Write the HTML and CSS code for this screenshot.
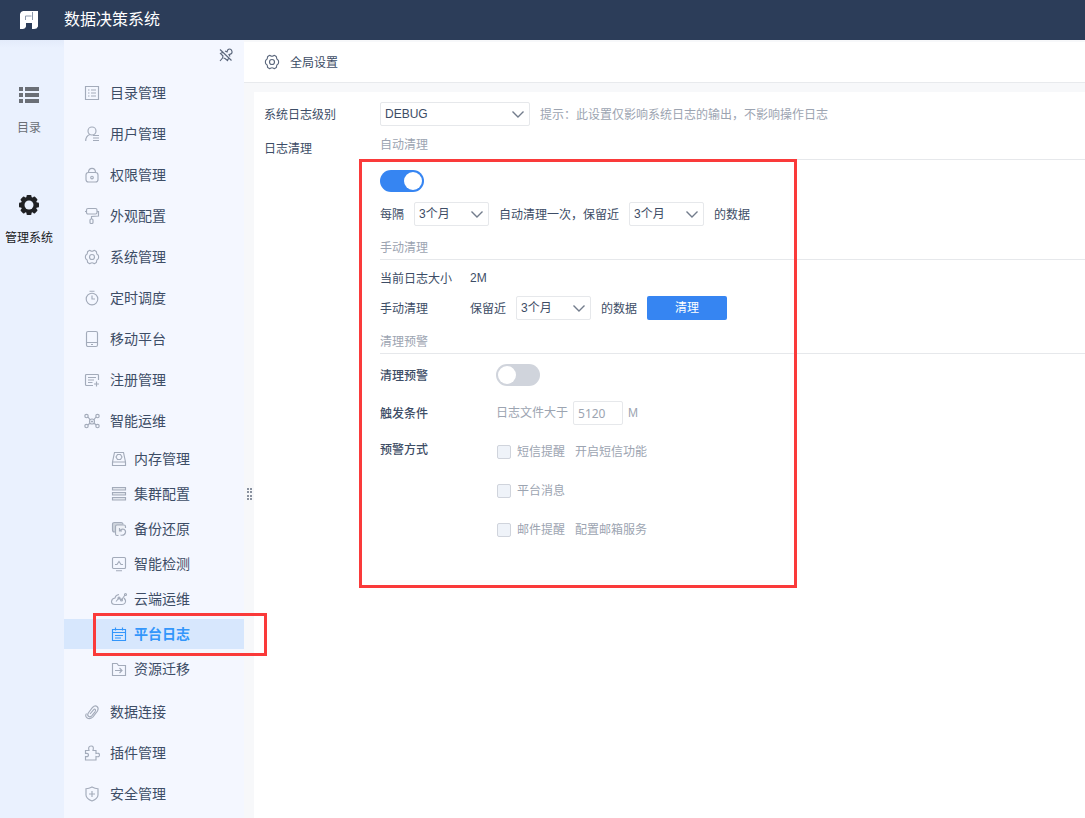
FILE: index.html
```html
<!DOCTYPE html>
<html lang="zh-CN">
<head>
<meta charset="utf-8">
<meta name="viewport" content="width=device-width, initial-scale=1">
<title>数据决策系统</title>
<link rel="stylesheet" href="styles.css">
</head>
<body>
<header class="header">
  <svg class="logo" viewBox="0 0 20 20" aria-hidden="true"><path d="M4 1H19v15.500Q18 19 15 19h-2v-6H7v3.500Q6.500 18.500 4 19H1V4Q1.500 1.500 4 1z" fill="#fff"/><path d="M6.500 10V6H12.500M13.500 2v8" fill="none" stroke="#8c98ab"/></svg>
  <h1 class="title">数据决策系统</h1>
</header>
<div class="layout">
  <nav class="rail" aria-label="主导航">
    <a class="rail-item" href="#"><svg class="rail-icon" viewBox="0 0 20 20"><path d="M0 2h4v4H0zM6 2h14v4H6zM0 8h4v4H0zM6 8h14v4H6zM0 14h4v4H0zM6 14h14v4H6z" fill="#6b6f76"/></svg><span>目录</span></a>
    <a class="rail-item current" href="#"><svg class="rail-icon" viewBox="0 0 20 20"><g fill="#202124"><g id="teeth"><rect x="7.500" y="0" width="5" height="20" rx="1"/><rect x="0" y="7.500" width="20" height="5" rx="1"/></g><use href="#teeth" transform="rotate(45 10 10)"/><circle cx="10" cy="10" r="8.200"/></g><circle cx="10" cy="10" r="4.500" fill="#eaf1fe"/></svg><span>管理系统</span></a>
  </nav>
  <aside class="sidebar">
    <div class="pin-row"><button class="pin" type="button" aria-label="取消固定"><svg viewBox="0 0 14 14" class="icon"><path d="M6 3L8 4Q8.500 1 10.500 1T13 3.500 10 6.500L11 8.500M3.500 4.500L1.500 5.500 4 8 3.500 10 1 13M4.500 10L6 10.500 8.500 12.500 9.500 10.500M1 1.500l11.500 11"/></svg></button></div>
    <ul class="menu">
      <li><a class="item" href="#"><svg class="icon" viewBox="0 0 14 14"><path d="M.5.500h13v13H.500zM3 4h1.500M3 7h1.500M3 10h1.500M6 4h5M6 7h5M6 10h5"/></svg>目录管理</a></li>
      <li><a class="item" href="#"><svg class="icon" viewBox="0 0 14 14"><circle cx="7" cy="4" r="4"/><path d="M5 7.500C2 8.500.700 10.500.700 14M8 8.500h6M8 11h6M8 13.500h6"/></svg>用户管理</a></li>
      <li><a class="item" href="#"><svg class="icon" viewBox="0 0 14 14"><rect x="1" y="4.500" width="12" height="9.500" rx="2.500"/><path d="M3.500 4.500C3.500-1 10.500-1 10.500 4.500"/><circle cx="7" cy="9.500" r="1.300"/></svg>权限管理</a></li>
      <li><a class="item" href="#"><svg class="icon" viewBox="0 0 14 14"><rect x="1.500" y="-.5" width="10.500" height="5.500" rx="1.500"/><path d="M0 2.500h1.500M12 2.500h1.500V7L6.500 7.500V10"/><rect x="5" y="10" width="3" height="4.500" rx="1"/></svg>外观配置</a></li>
      <li><a class="item" href="#"><svg class="icon" viewBox="0 0 14 14"><path id="cog" d="M4.300.6Q5 .2 5.500.8Q7 1.700 8.500.8Q9 .2 9.700.6L11.200 1.500Q11.600 1.800 11.500 2.500Q11.500 4.200 13 5Q13.600 5.400 13.600 7Q13.600 8.600 13 9Q11.500 9.800 11.500 11.500Q11.600 12.200 11.200 12.500L9.700 13.400Q9 13.800 8.500 13.200Q7 12.300 5.500 13.200Q5 13.800 4.300 13.400L2.800 12.500Q2.400 12.200 2.500 11.500Q2.500 9.800 1 9Q.4 8.600.4 7Q.4 5.400 1 5Q2.500 4.200 2.500 2.500Q2.400 1.800 2.800 1.500z"/><circle cx="7" cy="7" r="2.500"/></svg>系统管理</a></li>
      <li><a class="item" href="#"><svg class="icon" viewBox="0 0 14 14"><circle cx="7" cy="8" r="5.800"/><path d="M4.500.200h5M7 4.500V8h3"/></svg>定时调度</a></li>
      <li><a class="item" href="#"><svg class="icon" viewBox="0 0 14 14"><rect x="1.500" y="-.5" width="11" height="15" rx="1.500"/><path d="M1.500 10.500h11M6 12.500h2"/></svg>移动平台</a></li>
      <li><a class="item" href="#"><svg class="icon" viewBox="0 0 14 14"><path d="M13.500 7V2.500q0-1-1-1h-11q-1 0-1 1v9q0 1 1 1H8M3 4.500h8M3 7h6M3 9.500h4.500M11.500 8.500v5M9 11h5"/></svg>注册管理</a></li>
      <li><a class="item" href="#"><svg class="icon" viewBox="0 0 14 14"><circle cx="1.500" cy="2" r="1.700"/><circle cx="12.500" cy="2" r="1.700"/><circle cx="1.500" cy="12" r="1.700"/><circle cx="12.500" cy="12" r="1.700"/><circle cx="7" cy="7.500" r="2.500"/><path d="M3 3l2.200 2.800M11 3L8.800 5.800M3 11l2-2M11 11L9 9M6 7l1 1 1-1"/></svg>智能运维</a>
        <ul class="submenu">
          <li><a class="subitem" href="#"><svg class="icon" viewBox="0 0 14 14"><path d="M2.500.500h9l2 9.500v3.500H.500V10zM.500 10h13"/><path d="M5.500 2.500h3L10 5 8.500 7.500h-3L4 5z"/></svg>内存管理</a></li>
          <li><a class="subitem" href="#"><svg class="icon" viewBox="0 0 14 14"><path d="M.5.500h13v2.500H.500zM.500 5.500h13V8H.500zM.500 10.500h13V13H.500z" fill="#e0e4ec"/></svg>集群配置</a></li>
          <li><a class="subitem" href="#"><svg class="icon" viewBox="0 0 14 14"><path d="M3 10H2.500Q.500 10 .5 8V2.500q0-2 2-2H9q2 0 2 2" fill="#cdd3dc"/><path d="M13.500 6V4.500q0-1.500-1.500-1.500H5Q3.500 3 3.500 4.500V12q0 1.500 1.500 1.500h1.500" fill="#eef1f7"/><path d="M7.500 6v3H10M7.800 9C10 5.500 14 7.500 13.500 10.500Q12.500 14 8.500 13"/></svg>备份还原</a></li>
          <li><a class="subitem" href="#"><svg class="icon" viewBox="0 0 14 14"><rect x=".5" y=".5" width="13" height="11" rx="1"/><path d="M3 7.500h2L7 4.500l2 3h2M4 13.700h6"/></svg>智能检测</a></li>
          <li><a class="subitem" href="#"><svg class="icon" viewBox="0 0 14 14"><path d="M12 6q2.500 2.500 1 5-1 1.500-3 1.500H3Q-.5 12.500-.5 9.500-.300 6.500 3 6q.5-3 4-3.500M4 9.500L7 6l2.500 2L13 3"/><circle cx="7" cy="6" r="1"/><circle cx="9.500" cy="8" r="1"/><circle cx="13.500" cy="2.500" r="1"/></svg>云端运维</a></li>
          <li><a class="subitem active" href="#" aria-current="page"><svg class="icon" viewBox="0 0 14 14"><path d="M.5 2.500h13v11H.500zM.500 5.500h13M3.500.500v3M10.500.500v3M3 8.500h8M3 11h6"/></svg>平台日志</a></li>
          <li><a class="subitem" href="#"><svg class="icon" viewBox="0 0 14 14"><path d="M.5 1.500H5l1.500 2h7v10H.500zM3 8.500h7M7.500 6l2.500 2.500L7.500 11"/></svg>资源迁移</a></li>
        </ul>
      </li>
      <li><a class="item" href="#"><svg class="icon" viewBox="0 0 14 14"><path d="M5 9L8.500 4.800Q9.500 3.700 10.300 4.400T10 6.800L6.700 10.800Q5 12.500 3.500 11.300T3.300 8L7.500 2.500Q10 0 12 1.500T12.500 6L8 11.800Q4.800 14.800 2.200 13T1.500 8.500"/></svg>数据连接</a></li>
      <li><a class="item" href="#"><svg class="icon" viewBox="0 0 14 14"><path d="M.5 4.500H4Q2.700.200 6 0T8 4.500h3V7.500q3.500-1 3.500 1.500T11 10.500V14H.500V10.500Q3.500 11 3.500 9T.5 7.500z"/></svg>插件管理</a></li>
      <li><a class="item" href="#"><svg class="icon" viewBox="0 0 14 14"><path d="M7 0q3 1.700 6 1.700V8q0 3.500-6 6-6-2.500-6-6V1.700Q4 1.700 7 0zM7 4v6M4 7h6"/></svg>安全管理</a></li>
    </ul>
  </aside>
  <main class="main">
    <div class="topbar"><svg class="icon topbar-icon" viewBox="0 0 14 14"><use href="#cog"/><circle cx="7" cy="7" r="2.500"/></svg><h2 class="topbar-title">全局设置</h2></div>
    <form class="panel">
      <label class="label" for="level">系统日志级别</label>
      <div class="row">
        <span class="picker wide"><select id="level"><option>DEBUG</option></select><svg class="chevron" viewBox="0 0 12 7"><path d="M.5.500L6 6l5.500-5.500"/></svg></span>
        <span class="hint">提示：此设置仅影响系统日志的输出，不影响操作日志</span>
      </div>
      <div class="label clean-label">日志清理</div>
      <div class="sections">
        <h3 class="section-title first">自动清理</h3>
        <input class="switch" type="checkbox" role="switch" aria-label="自动清理" checked>
        <div class="row">
          <label for="every">每隔</label>
          <span class="picker"><select id="every"><option>3个月</option></select><svg class="chevron" viewBox="0 0 12 7"><path d="M.5.500L6 6l5.500-5.500"/></svg></span>
          <label for="keep">自动清理一次，保留近</label>
          <span class="picker"><select id="keep"><option>3个月</option></select><svg class="chevron" viewBox="0 0 12 7"><path d="M.5.500L6 6l5.500-5.500"/></svg></span>
          <span>的数据</span>
        </div>
        <h3 class="section-title">手动清理</h3>
        <div class="pair"><span>当前日志大小</span><span>2M</span></div>
        <div class="pair"><span>手动清理</span>
          <div class="row">
            <label for="manual">保留近</label>
            <span class="picker"><select id="manual"><option>3个月</option></select><svg class="chevron" viewBox="0 0 12 7"><path d="M.5.500L6 6l5.500-5.500"/></svg></span>
            <span>的数据</span>
            <button class="primary" type="button">清理</button>
          </div>
        </div>
        <h3 class="section-title">清理预警</h3>
        <div class="warning">
          <label class="strong" for="warn">清理预警</label>
          <input class="switch" id="warn" type="checkbox" role="switch">
          <span class="strong">触发条件</span>
          <div class="threshold"><label for="size">日志文件大于</label><input class="number" id="size" type="text" value="5120" disabled><span>M</span></div>
          <span class="strong methods-label">预警方式</span>
          <div class="methods">
            <div class="method"><input class="check" id="sms" type="checkbox" disabled><label for="sms">短信提醒</label><a href="#">开启短信功能</a></div>
            <div class="method"><input class="check" id="msg" type="checkbox" disabled><label for="msg">平台消息</label></div>
            <div class="method"><input class="check" id="mail" type="checkbox" disabled><label for="mail">邮件提醒</label><a href="#">配置邮箱服务</a></div>
          </div>
        </div>
      </div>
    </form>
    <svg class="grip" viewBox="0 0 5 12" aria-hidden="true"><path d="M0 0h2v2H0zM3 0h2v2H3zM0 3h2v2H0zM3 3h2v2H3zM0 7h2v2H0zM3 7h2v2H3zM0 10h2v2H0zM3 10h2v2H3z" fill="#8a92a0"/></svg>
  </main>
</div>
<div class="mark mark-settings"></div>
<div class="mark mark-menu"></div>
</body>
</html>
```
FILE: styles.css
```css
* { box-sizing: border-box; }
body {
  margin: 0;
  min-height: 100vh;
  display: flex;
  flex-direction: column;
  position: relative;
  background: #fff;
  color: #3d4d66;
  font: 12px/16px "Liberation Sans", "Noto Sans CJK SC", sans-serif;
}
h1, h2, h3, ul { margin: 0; padding: 0; font-weight: 400; }
ul { list-style: none; }
a { color: inherit; text-decoration: none; }
button, input, select { font: inherit; color: inherit; margin: 0; }
.header {
  display: flex;
  align-items: center;
  gap: 25px;
  height: 40px;
  padding-left: 19px;
  background: #2c3d59;
  color: #fff;
}
.logo { width: 20px; height: 20px; }
.title { font-size: 16px; line-height: 24px; }
.layout { flex: 1; display: flex; }

.rail {
  width: 64px;
  display: flex;
  flex-direction: column;
  gap: 59px;
  padding-top: 45px;
  background: linear-gradient(#e3ebfa, #eaf1fe 8px);
}
.rail-item {
  display: flex;
  flex-direction: column;
  align-items: center;
  gap: 15px;
  padding-right: 6px;
  color: #6b6f76;
}
.rail-item.current { color: #1a1b1d; }
.rail-icon { width: 20px; height: 20px; }

.sidebar { width: 180px; background: #f4f7ff; }
.pin-row { display: flex; justify-content: flex-end; height: 32px; padding: 8px 11px 0 0; }
.pin { width: 14px; height: 14px; padding: 0; border: 0; background: none; }
.icon {
  display: block;
  flex: none;
  width: 14px;
  height: 14px;
  overflow: visible;
  fill: none;
  stroke: #a3abba;
  stroke-width: 1.15;
}
.pin .icon, .topbar-icon { stroke: #5c687d; }
.item, .subitem { display: flex; align-items: center; font-size: 14px; line-height: 20px; }
.item { height: 41px; gap: 11px; padding-left: 21px; }
.submenu { display: grid; gap: 5px; padding: 3px 0 7px; }
.subitem { height: 30px; gap: 8px; padding-left: 48px; }
.subitem.active { background: #d7e7fd; color: #3396fb; font-weight: 700; }
.active .icon { stroke: #3396fb; }

.main {
  flex: 1;
  min-width: 0;
  position: relative;
  display: flex;
  flex-direction: column;
  padding-top: 2px;
  background: #f7f8fa;
}
.topbar {
  display: flex;
  align-items: center;
  gap: 11px;
  height: 41px;
  padding-left: 21px;
  background: #fff;
  border-bottom: 1px solid #e8eaed;
}
.topbar-title { padding-top: 2px; font-size: 12px; }
.grip { position: absolute; left: 3px; top: 448px; width: 5px; height: 12px; }

.panel {
  flex: 1;
  display: grid;
  grid-template-columns: 116px 1fr;
  grid-template-rows: auto 1fr;
  row-gap: 4px;
  margin: 9px 0 0 10px;
  padding: 10px 0 0 10px;
  background: #fff;
}
.label { padding-top: 2px; line-height: 22px; }
.clean-label { line-height: 34px; }
.row { display: flex; align-items: center; gap: 10px; }
.row > label, .row > span:not(.picker), .pair > span:first-child { padding-top: 2px; }
.hint, .section-title, .threshold, .method { color: #9ca4b1; }
.picker { display: grid; width: 75px; height: 24px; align-items: center; }
.picker.wide { width: 150px; }
.picker select {
  grid-area: 1 / 1;
  width: 100%;
  height: 24px;
  padding: 0 24px 0 4px;
  border: 1px solid #e6e8eb;
  border-radius: 2px;
  background: #fff;
  appearance: none;
}
.chevron {
  grid-area: 1 / 1;
  justify-self: end;
  width: 12px;
  height: 7px;
  margin-right: 6px;
  fill: none;
  stroke: #727c8c;
  stroke-width: 1.4;
  pointer-events: none;
}
.sections { display: flex; flex-direction: column; gap: 10px; }
.section-title { padding-top: 2px; font-size: 12px; line-height: 21px; border-bottom: 1px solid #e6e8eb; }
.section-title.first { line-height: 27px; }
.switch {
  appearance: none;
  display: flex;
  width: 44px;
  height: 22px;
  padding: 2px;
  border-radius: 11px;
  background: #d0d4dc;
}
.switch::before { content: ""; width: 18px; height: 18px; border-radius: 50%; background: #fff; }
.switch:checked { justify-content: flex-end; background: #3685f2; }
.pair { display: grid; grid-template-columns: 90px 1fr; align-items: center; }
.pair > span { line-height: 14px; }
.primary { width: 80px; height: 24px; padding: 0; border: 0; border-radius: 2px; background: #3685f2; color: #fff; }
.warning { display: grid; grid-template-columns: 116px 1fr; gap: 15px 0; align-items: center; }
.strong { padding-top: 2px; font-weight: 500; }
.methods-label { align-self: start; }
.threshold { display: flex; align-items: center; gap: 5px; }
.number {
  width: 50px;
  height: 24px;
  padding: 0 4px;
  border: 1px solid #e6e8eb;
  border-radius: 2px;
  background: #fff;
  font-family: "Noto Sans", sans-serif;
}
.methods { display: grid; gap: 15px; }
.method { display: flex; align-items: center; height: 24px; gap: 10px; }
.check {
  appearance: none;
  width: 14px;
  height: 14px;
  margin: 0 -4px 0 1px;
  border: 1px solid #d0d4dc;
  border-radius: 2px;
  background: #eff3f9;
}

.mark { position: absolute; border: 3px solid #fa3a3a; pointer-events: none; }
.mark-settings { left: 359px; top: 159px; width: 438px; height: 429px; }
.mark-menu { left: 93px; top: 613px; width: 174px; height: 43px; }
```
